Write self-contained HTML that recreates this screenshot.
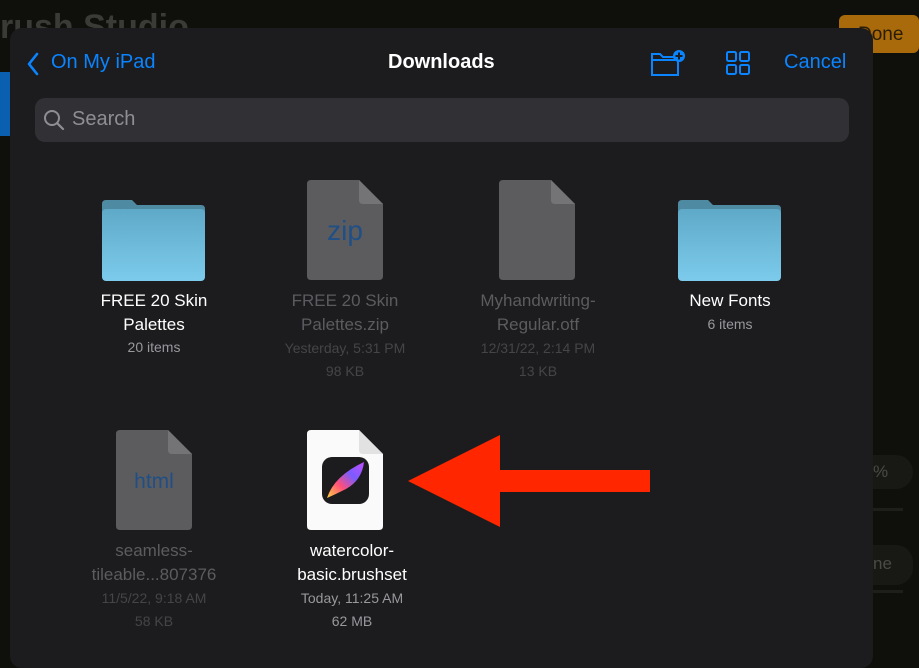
<!DOCTYPE html>
<html><head><meta charset="utf-8"><style>
*{margin:0;padding:0;box-sizing:border-box}
body{width:919px;height:643px;overflow:hidden;background:#0f100c;font-family:"Liberation Sans",sans-serif;position:relative}
.abs{position:absolute}
.modal{left:10px;top:28px;width:863px;height:640px;background:#1c1c1e;border-radius:12px}
.blue{color:#0a84ff}
.item{position:absolute;width:160px;text-align:center}
.name{font-size:17px;line-height:24px;color:#fff}
.meta{font-size:14px;line-height:23px;color:#98989d}
.dim .name{color:#5c5c60}.dim .meta{color:#454548}
</style></head><body>
<div class="abs" style="left:0;top:8px;font-size:34px;font-weight:bold;color:#3a3a37">rush Studio</div>
<div class="abs" style="left:0;top:72px;width:10px;height:64px;background:#0a5fb0"></div>
<div class="abs" style="left:839px;top:15px;width:80px;height:38px;background:#a86a0a;border-radius:6px;color:#2b1d05;font-size:19px;padding:9px 0 0 19px">Done</div>
<div class="abs" style="left:873px;top:455px;width:40px;height:34px;background:#181915;border-radius:0 17px 17px 0;color:#4a4a46;font-size:17px;padding:7px 0 0 0">%</div>
<div class="abs" style="left:873px;top:508px;width:30px;height:3px;background:#1e1f1b"></div>
<div class="abs" style="left:873px;top:545px;width:40px;height:40px;background:#181915;border-radius:0 17px 17px 0;color:#4a4a46;font-size:17px;padding:9px 0 0 0">ne</div>
<div class="abs" style="left:873px;top:590px;width:30px;height:3px;background:#1e1f1b"></div>
<div class="modal abs">
 <svg class="abs" style="left:16px;top:24px" width="14" height="24" viewBox="0 0 14 24"><path d="M11 2 L3 12 L11 22" stroke="#0a84ff" stroke-width="2.6" fill="none" stroke-linecap="round" stroke-linejoin="round"/></svg>
 <div class="abs blue" style="left:41px;top:23px;font-size:20px">On My iPad</div>
 <div class="abs" style="left:378px;top:23px;font-size:20px;color:#fff;font-weight:bold">Downloads</div>
 <svg class="abs" style="left:640px;top:20px" width="38" height="30" viewBox="0 0 38 30"><path d="M2 6 H10 L13 9 H28 V27 H2 Z M2 12 H28" stroke="#0a84ff" stroke-width="2" fill="none"/><circle cx="29" cy="8" r="6" fill="#0a84ff"/><path d="M29 4.5V11.5M25.5 8H32.5" stroke="#1c1c1e" stroke-width="2"/></svg>
 <svg class="abs" style="left:715px;top:22px" width="26" height="26" viewBox="0 0 26 26" fill="none" stroke="#0a84ff" stroke-width="2"><rect x="2" y="2" width="9" height="9" rx="1.5"/><rect x="15" y="2" width="9" height="9" rx="1.5"/><rect x="2" y="15" width="9" height="9" rx="1.5"/><rect x="15" y="15" width="9" height="9" rx="1.5"/></svg>
 <div class="abs blue" style="left:774px;top:23px;font-size:20px">Cancel</div>
 <div class="abs" style="left:25px;top:70px;width:814px;height:44px;background:#313135;border-radius:10px"></div>
 <svg class="abs" style="left:33px;top:81px" width="22" height="22" viewBox="0 0 22 22"><circle cx="9" cy="9" r="7" stroke="#8e8e93" stroke-width="2" fill="none"/><path d="M14 14 L20 20" stroke="#8e8e93" stroke-width="2.2" stroke-linecap="round"/></svg>
 <div class="abs" style="left:62px;top:80px;font-size:20px;color:#8e8e93">Search</div>
</div>
<svg class="abs" style="left:0;top:0" width="919" height="643">
 <defs><linearGradient id="fg" x1="0" y1="0" x2="0" y2="1"><stop offset="0" stop-color="#5fa9c8"/><stop offset="1" stop-color="#7ccbec"/></linearGradient>
 <linearGradient id="pg" x1="0" y1="1" x2="1" y2="0"><stop offset="0" stop-color="#ffd23f"/><stop offset=".35" stop-color="#ff4f7a"/><stop offset=".65" stop-color="#7a5cff"/><stop offset="1" stop-color="#c44dff"/></linearGradient></defs>
 <path d="M102 204 Q102 200 106 200 H132 L137 205 H201 Q205 205 205 209 V215 H102Z" fill="#4f8aa3"/><rect x="102" y="209" width="103" height="72" rx="4" fill="url(#fg)"/>
 <path d="M678 204 Q678 200 682 200 H708 L713 205 H777 Q781 205 781 209 V215 H678Z" fill="#4f8aa3"/><rect x="678" y="209" width="103" height="72" rx="4" fill="url(#fg)"/>
 <path d="M311 180 H359 L383 204 V276 Q383 280 379 280 H311 Q307 280 307 276 V184 Q307 180 311 180Z" fill="#5c5c5e"/><path d="M359 180 V200 Q359 204 363 204 H383" fill="#747476"/>
 <path d="M503 180 H551 L575 204 V276 Q575 280 571 280 H503 Q499 280 499 276 V184 Q499 180 503 180Z" fill="#5c5c5e"/><path d="M551 180 V200 Q551 204 555 204 H575" fill="#747476"/>
 <text x="345" y="240" font-size="28" fill="#1f4f86" text-anchor="middle" font-family="Liberation Sans">zip</text>
 <path d="M120 430 H168 L192 454 V526 Q192 530 188 530 H120 Q116 530 116 526 V434 Q116 430 120 430Z" fill="#5c5c5e"/><path d="M168 430 V450 Q168 454 172 454 H192" fill="#747476"/>
 <text x="154" y="488" font-size="21" fill="#1f4f86" text-anchor="middle" font-family="Liberation Sans">html</text>
 <path d="M311 430 H359 L383 454 V526 Q383 530 379 530 H311 Q307 530 307 526 V434 Q307 430 311 430Z" fill="#fafafa"/><path d="M359 430 V450 Q359 454 363 454 H383" fill="#e2e2e2"/>
 <rect x="322" y="457" width="47" height="47" rx="10" fill="#1c1c1e"/>
 <path d="M327 498 Q334 476 364 462 Q362 480 346 489 Q336 494 327 498Z" fill="url(#pg)"/>
 <path d="M408 481 L500 435 L500 470 L650 470 L650 492 L500 492 L500 527 Z" fill="#ff2600"/>
</svg>
<div class="item" style="left:74px;top:289px"><div class="name">FREE 20 Skin<br>Palettes</div><div class="meta" style="margin-top:-1px">20 items</div></div>
<div class="item dim" style="left:265px;top:289px"><div class="name">FREE 20 Skin<br>Palettes.zip</div><div class="meta">Yesterday, 5:31 PM<br>98 KB</div></div>
<div class="item dim" style="left:458px;top:289px"><div class="name">Myhandwriting-<br>Regular.otf</div><div class="meta">12/31/22, 2:14 PM<br>13 KB</div></div>
<div class="item" style="left:650px;top:289px"><div class="name">New Fonts</div><div class="meta">6 items</div></div>
<div class="item dim" style="left:74px;top:539px"><div class="name">seamless-<br>tileable...807376</div><div class="meta">11/5/22, 9:18 AM<br>58 KB</div></div>
<div class="item" style="left:272px;top:539px"><div class="name">watercolor-<br>basic.brushset</div><div class="meta">Today, 11:25 AM<br>62 MB</div></div>
</body></html>
